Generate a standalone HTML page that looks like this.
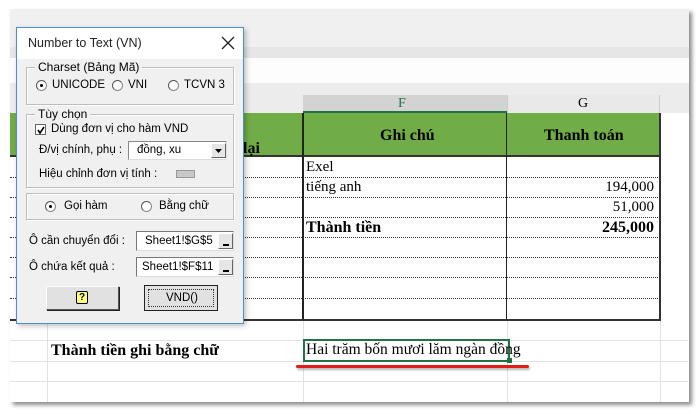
<!DOCTYPE html>
<html><head><meta charset="utf-8"><style>
*{margin:0;padding:0;box-sizing:border-box}
body{width:700px;height:414px;background:#fff;position:relative;overflow:hidden;font-family:"Liberation Sans",sans-serif}
.a{position:absolute}
.s{font-family:"Liberation Serif",serif;font-size:15px;color:#000;white-space:nowrap}
.t{font-family:"Liberation Sans",sans-serif;font-size:11.5px;color:#000;white-space:nowrap}
.h{position:absolute;height:1px;left:10px;width:678px;background:#e2e2e2}
.d{position:absolute;height:0;border-top:1px dotted #333}
.rad{position:absolute;width:11px;height:11px;border-radius:50%;border:1px solid #888;background:#fff;border-top-color:#555;border-left-color:#555}
.grp{position:absolute;border:1px solid #bdbdbd;box-shadow:1px 1px 0 #fff inset,1px 1px 0 #fff}
.lg{position:absolute;top:-8px;left:8px;background:#f0f0f0;padding:0 3px}
.btn{position:absolute;background:#e1e1e1;border:1px solid #fff;border-right-color:#555;border-bottom-color:#555;box-shadow:1px 1px 0 #222}
.r{text-align:right;width:120px}
</style></head><body>
<div class="a" style="left:10px;top:9px;width:679px;height:393px;box-shadow:3px 3px 4px rgba(0,0,0,.45);background:#fff"></div>
<div class="a" style="left:10px;top:9px;width:679px;height:38px;background:#f0f0f0"></div>
<div class="a" style="left:10px;top:47px;width:679px;height:11px;background:#e6e6e6"></div>
<div class="a" style="left:10px;top:58px;width:679px;height:25px;background:#fdfdfd"></div>
<div class="a" style="left:10px;top:83px;width:679px;height:30px;background:#ececec"></div>
<div class="a" style="left:303px;top:95px;width:204px;height:18px;background:#d3d3d3;border-bottom:2px solid #217346"></div>
<div class="a" style="left:507px;top:95px;width:153px;height:18px;background:#e9e9e9;border-left:1px solid #ccc;border-right:1px solid #ccc"></div>
<div class="a s" style="left:398px;top:96px;color:#217346;font-size:14px">F</div>
<div class="a s" style="left:578px;top:96px;font-size:14px">G</div>
<div class="a" style="left:10px;top:113px;width:650px;height:44px;background:#70ad47;border-bottom:2px solid #333"></div>
<div class="a" style="left:302px;top:113px;width:2px;height:207px;background:#222"></div>
<div class="a" style="left:506px;top:113px;width:1px;height:207px;background:#222"></div>
<div class="a" style="left:659px;top:113px;width:2px;height:207px;background:#333"></div>
<div class="a" style="left:10px;top:319px;width:651px;height:2px;background:#333"></div>
<div class="a s" style="left:380px;top:127px;font-weight:bold;font-size:16px">Ghi chú</div>
<div class="a s" style="left:544px;top:127px;font-weight:bold;font-size:16px">Thanh toán</div>
<div class="a s" style="left:243px;top:140px;font-weight:bold;font-size:16px">lại</div>
<div class="d" style="left:10px;width:650px;top:177px"></div>
<div class="d" style="left:10px;width:650px;top:197px"></div>
<div class="d" style="left:10px;width:650px;top:217px"></div>
<div class="d" style="left:10px;width:650px;top:237px"></div>
<div class="d" style="left:10px;width:650px;top:257px"></div>
<div class="d" style="left:10px;width:650px;top:277px"></div>
<div class="d" style="left:10px;width:650px;top:298px"></div>
<div class="a s" style="left:306px;top:159px">Exel</div>
<div class="a s" style="left:306px;top:179px">tiếng anh</div>
<div class="a s r" style="left:534px;top:179px">194,000</div>
<div class="a s r" style="left:534px;top:199px">51,000</div>
<div class="a s" style="left:306px;top:219px;font-weight:bold;font-size:16px">Thành tiền</div>
<div class="a s r" style="left:534px;top:219px;font-weight:bold;font-size:16px">245,000</div>
<div class="h" style="top:340px"></div>
<div class="h" style="top:361px"></div>
<div class="h" style="top:381px"></div>
<div class="a" style="left:47px;top:321px;width:1px;height:81px;background:#e2e2e2"></div>
<div class="a" style="left:303px;top:321px;width:1px;height:81px;background:#e2e2e2"></div>
<div class="a" style="left:507px;top:321px;width:1px;height:81px;background:#e2e2e2"></div>
<div class="a" style="left:660px;top:321px;width:1px;height:81px;background:#e2e2e2"></div>
<div class="a s" style="left:51px;top:342px;font-weight:bold;font-size:16px">Thành tiền ghi bằng chữ</div>
<div class="a" style="left:303px;top:339px;width:207px;height:23px;border:2px solid #217346"></div>
<div class="a" style="left:507px;top:358px;width:5px;height:5px;background:#217346"></div>
<div class="a s" style="left:306px;top:341px;font-size:15.5px">Hai trăm bốn mươi lăm ngàn đồng</div>
<div class="a" style="left:296px;top:365px;width:233px;height:3px;background:#e31b1b;border-radius:2px;box-shadow:1px 2px 2px rgba(0,0,0,.3)"></div>
<div class="a" style="left:16px;top:27px;width:228px;height:297px;background:#f0f0f0;border:1px solid #4a90d9;box-shadow:2px 2px 5px rgba(0,0,0,.25)">
 <div class="a" style="left:0;top:0;width:226px;height:31px;background:#fff"></div>
 <div class="a" style="left:11px;top:8px;font-size:12.5px;color:#222">Number to Text (VN)</div>
 <svg class="a" style="left:204px;top:8px" width="14" height="14"><path d="M1 1L13 13M13 1L1 13" stroke="#222" stroke-width="1.3"/></svg>
 <div class="grp" style="left:9px;top:39px;width:208px;height:38px"><span class="lg t" style="font-size:12px">Charset (Bảng Mã)</span></div>
 <div class="rad" style="left:19px;top:52px"><div class="a" style="left:3px;top:3px;width:3px;height:3px;background:#000;border-radius:50%"></div></div>
 <div class="a t" style="left:35px;top:51px">UNICODE</div>
 <div class="rad" style="left:95px;top:52px"></div>
 <div class="a t" style="left:111px;top:51px">VNI</div>
 <div class="rad" style="left:151px;top:52px"></div>
 <div class="a t" style="left:167px;top:51px">TCVN 3</div>
 <div class="grp" style="left:9px;top:86px;width:208px;height:74px"><span class="lg t" style="font-size:12px">Tùy chọn</span></div>
 <div class="a" style="left:18px;top:96px;width:11px;height:11px;background:#fff;border:1px solid #666"><svg class="a" style="left:0;top:0" width="10" height="10"><path d="M2 5L4 8L8 2" stroke="#000" stroke-width="1.6" fill="none"/></svg></div>
 <div class="a t" style="left:34px;top:95px">Dùng đơn vị cho hàm VND</div>
 <div class="a t" style="left:22px;top:116px">Đ/vị chính, phụ :</div>
 <div class="a" style="left:111px;top:113px;width:99px;height:19px;background:#fff;border:1px solid #888;border-right-color:#ddd;border-bottom-color:#ddd"></div>
 <div class="a t" style="left:120px;top:116px">đồng, xu</div>
 <div class="a" style="left:194px;top:115px;width:15px;height:15px;background:#e6e6e6;border:1px solid #fff;border-right-color:#666;border-bottom-color:#666"><svg class="a" style="left:3px;top:5px" width="8" height="5"><path d="M0 0H7L3.5 4Z" fill="#000"/></svg></div>
 <div class="a t" style="left:22px;top:140px">Hiệu chỉnh đơn vị tính :</div>
 <div class="a" style="left:159px;top:142px;width:19px;height:8px;background:#c8c8c8;border:1px solid #999"></div>
 <div class="grp" style="left:9px;top:165px;width:208px;height:27px"></div>
 <div class="rad" style="left:28px;top:173px"><div class="a" style="left:3px;top:3px;width:3px;height:3px;background:#000;border-radius:50%"></div></div>
 <div class="a t" style="left:47px;top:172px">Gọi hàm</div>
 <div class="rad" style="left:124px;top:173px"></div>
 <div class="a t" style="left:142px;top:172px">Bằng chữ</div>
 <div class="a t" style="left:12px;top:207px">Ô cần chuyển đổi :</div>
 <div class="a" style="left:119px;top:203px;width:98px;height:20px;background:#fff;border:1px solid #777;border-right-color:#ddd;border-bottom-color:#ddd"></div>
 <div class="a t" style="left:128px;top:207px">Sheet1!$G$5</div>
 <div class="a" style="left:201px;top:205px;width:15px;height:16px;background:#e6e6e6;border:1px solid #fff;border-right-color:#666;border-bottom-color:#666"><div class="a" style="left:4px;top:10px;width:6px;height:2px;background:#000"></div></div>
 <div class="a t" style="left:12px;top:233px">Ô chứa kết quả :</div>
 <div class="a" style="left:119px;top:229px;width:98px;height:20px;background:#fff;border:1px solid #777;border-right-color:#ddd;border-bottom-color:#ddd"></div>
 <div class="a t" style="left:125px;top:233px">Sheet1!$F$11</div>
 <div class="a" style="left:201px;top:231px;width:15px;height:16px;background:#e6e6e6;border:1px solid #fff;border-right-color:#666;border-bottom-color:#666"><div class="a" style="left:4px;top:10px;width:6px;height:2px;background:#000"></div></div>
 <div class="btn" style="left:29px;top:258px;width:73px;height:24px"><div class="a" style="left:29px;top:4px;width:12px;height:13px;background:#ffff80;border:1px solid #000;border-radius:2px;font-size:10px;font-weight:bold;line-height:11px;text-align:center">?</div></div>
 <div class="a" style="left:127px;top:257px;width:74px;height:26px;border:1px solid #222;background:#e1e1e1"><div class="a" style="left:3px;top:3px;width:66px;height:18px;border:1px dotted #333"></div><div class="a t" style="left:21px;top:6px">VND()</div></div>
</div>
</body></html>
